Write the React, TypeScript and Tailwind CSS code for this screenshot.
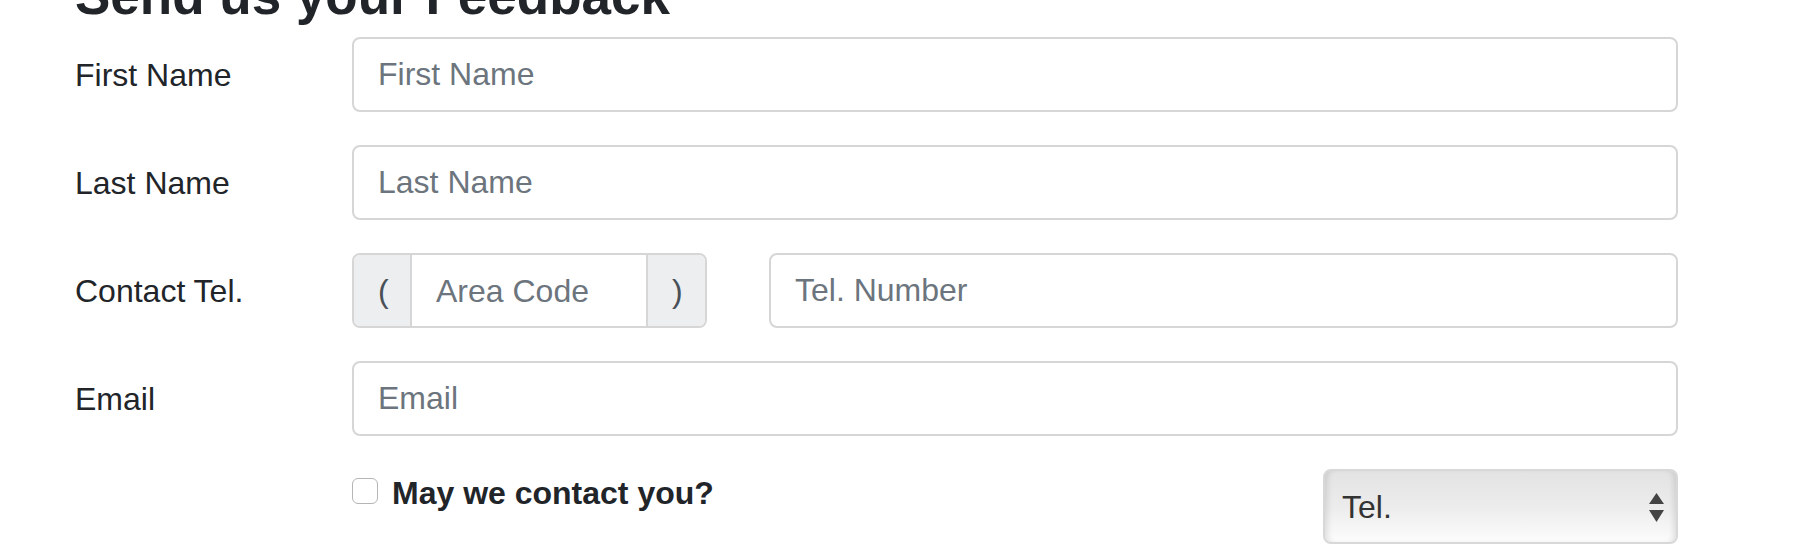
import React from 'react';

const inputCls =
  'h-[75px] w-full border-2 border-[#d6d6d6] rounded-[8px] px-[24px] text-[32px] text-[#495057] bg-white outline-none placeholder:text-[#6c757d]';

function FormRow({ label, children }: { label?: string; children: React.ReactNode }) {
  return (
    <div className="flex items-center mb-[33px]">
      <label className="w-[277px] shrink-0 text-[32px] leading-[48px]">{label}</label>
      <div className="w-[1326px]">{children}</div>
    </div>
  );
}

export default function App() {
  return (
    <div className="w-full h-[552px] overflow-hidden bg-white text-[#212529] font-['Liberation_Sans',Arial,sans-serif]">
      <div className="pl-[75px]">
        {/* heading is cut off at the top of the shot */}
        <h2 className="-mt-[31px] mb-[15px] h-[53px] text-[53px] leading-[53px] font-bold whitespace-nowrap">
          Send us your Feedback
        </h2>

        <FormRow label="First Name">
          <input className={inputCls} placeholder="First Name" />
        </FormRow>

        <FormRow label="Last Name">
          <input className={inputCls} placeholder="Last Name" />
        </FormRow>

        <FormRow label="Contact Tel.">
          <div className="flex items-center gap-[62px]">
            <div className="flex h-[75px] w-[355px] shrink-0 border-2 border-[#d6d6d6] rounded-[8px] overflow-hidden">
              <span className="flex items-center px-[24px] w-[58px] bg-[#eceef0] border-r-2 border-[#d6d6d6] text-[32px] text-[#495057]">
                (
              </span>
              <input
                className="min-w-0 flex-1 px-[24px] text-[32px] text-[#495057] outline-none placeholder:text-[#6c757d]"
                placeholder="Area Code"
              />
              <span className="flex items-center px-[24px] w-[59px] bg-[#eceef0] border-l-2 border-[#d6d6d6] text-[32px] text-[#495057]">
                )
              </span>
            </div>
            <input className={inputCls} placeholder="Tel. Number" />
          </div>
        </FormRow>

        <FormRow label="Email">
          <input className={inputCls} placeholder="Email" />
        </FormRow>

        <div className="flex">
          <div className="w-[277px] shrink-0" />
          <div className="w-[1326px] flex justify-between items-start">
            <label className="flex items-start gap-[14px]">
              <span className="mt-[9px] w-[26px] h-[26px] rounded-[6px] border border-[#b5b5b5] bg-white" />
              <span className="text-[32px] leading-[48px] font-bold">May we contact you?</span>
            </label>
            <div className="relative h-[75px] w-[355px] rounded-[8px] border-2 border-[#d8d8d8] bg-gradient-to-b from-[#e3e3e3] via-[#ececec] to-[#fcfcfc] shadow-[inset_6px_0_6px_-4px_rgba(0,0,0,0.12),inset_-6px_0_6px_-4px_rgba(0,0,0,0.12)] flex items-center pl-[17px]">
              <span className="text-[32px] text-[#333]">Tel.</span>
              <svg className="absolute right-[12px] top-[22px]" width="15" height="29" viewBox="0 0 15 29">
                <path d="M7.5 0 L15 11 L0 11 Z" fill="#444" />
                <path d="M0 17 L15 17 L7.5 29 Z" fill="#444" />
              </svg>
            </div>
          </div>
        </div>
      </div>
    </div>
  );
}
